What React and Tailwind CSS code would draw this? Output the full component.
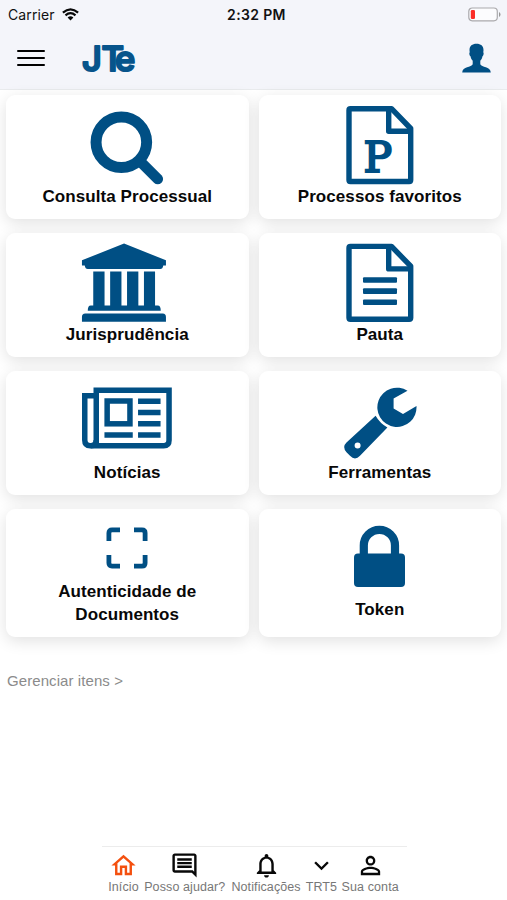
const BLUE = "#004f84";

function Art({ box, children }) {
  return (
    <svg className="h-[84px] w-[92px] shrink-0" viewBox={box} fill={BLUE}>
      {children}
    </svg>
  );
}

function Sheet() {
  return (
    <g fill="none" stroke={BLUE} strokeWidth="5.4" strokeLinejoin="round">
      <path d="M350.500 108.700H391.500L410.700 128.500V180Q410.700 181.500 409.200 181.500H350.500Q349 181.500 349 180V110.200Q349 108.700 350.500 108.700Z" />
      <path d="M388.700 109V131.200H410.500" />
    </g>
  );
}

function SearchArt() {
  return (
    <Art box="81.250 102 92 84">
      <circle cx="121.600" cy="142.300" r="25.300" fill="none" stroke={BLUE} strokeWidth="11" />
      <path d="M141 162L158 179" stroke={BLUE} strokeWidth="10.600" strokeLinecap="round" />
    </Art>
  );
}

function FavoriteArt() {
  return (
    <Art box="334 102 92 84">
      <Sheet />
      <text
        transform="translate(363.500 171.600)"
        fontSize="42.500"
        fontWeight="400"
        fontFamily="'DejaVu Serif', serif"
        stroke={BLUE}
        strokeWidth="2.200"
      >
        P
      </text>
    </Art>
  );
}

function CourtArt() {
  return (
    <Art box="81.250 240 92 84">
      <path d="M124.300 243.500L166.200 260.300V265.500H163.500Q163 269 160.500 269H88Q85.500 269 85 265.500H82.200V260.300Z" />
      <path d="M93.500 271.500H104.800V305.500H110.400V271.500H121.700V305.500H127.300V271.500H138.600V305.500H144.200V271.500H155.300V305.500H158Q161 305.500 161 310.800H88Q88 305.500 91 305.500H93.500Z" />
      <path d="M82.200 321.800V317Q82.200 313.500 85.500 313.500H163Q166.200 313.500 166.200 317V321.800Z" />
    </Art>
  );
}

function PautaArt() {
  return (
    <Art box="334 102.300 92 84">
      <Sheet />
      <rect x="363" y="139.500" width="34" height="5.600" rx="1" />
      <rect x="363" y="150.600" width="34" height="5.600" rx="1" />
      <rect x="363" y="161.700" width="34" height="5.600" rx="1" />
    </Art>
  );
}

function NewsArt() {
  return (
    <Art box="81.250 378 92 84">
      <g fill="none" stroke={BLUE} strokeWidth="5.500">
        <path d="M96.500 445.700V390.200H169.300V440.200Q169.300 445.700 164 445.700H90.500Q85 445.700 85 440V395.800H94" />
        <path d="M96.500 440Q96.500 445.700 91 445.700" />
        <rect x="107.400" y="401" width="22.800" height="22.800" />
        <path d="M104.700 434.900H133M138.300 401.300H160.800M138.300 412.500H160.800M138.300 423.700H160.800M138.300 434.900H160.800" />
      </g>
    </Art>
  );
}

function WrenchArt() {
  return (
    <Art box="334 378.400 92 84">
      <path d="M407.500 391.200A19.600 19.600 0 1 0 416.500 406.500L403 414.500L393.600 409V398.800Z" />
      <path
        fillRule="evenodd"
        d="M375.600 416.200Q380 424 387.400 427.800L360 456.200Q355 461.500 350 456.200L346.500 452.600Q341.800 447.500 346.500 443Z M357.600 443A3 3 0 1 0 357.600 449A3 3 0 1 0 357.600 443Z"
      />
    </Art>
  );
}

function ScanArt() {
  return (
    <svg className="h-[42px] w-[42px] shrink-0" viewBox="0 0 42 42" fill="none" stroke={BLUE} strokeWidth="4.800">
      <path d="M2.900 14V6Q2.900 2.900 6 2.900H14M28 2.900H36Q39.100 2.900 39.100 6V14M39.100 28V36Q39.100 39.100 36 39.100H28M14 39.100H6Q2.900 39.100 2.900 36V28" />
    </svg>
  );
}

function LockArt() {
  return (
    <svg className="h-[62px] w-[51px] shrink-0" viewBox="0 0 51 62" fill={BLUE}>
      <rect y="28.400" width="51" height="33.600" rx="4" />
      <path d="M9.800 32V20.500A15.600 15.600 0 0 1 41 20.500V32" fill="none" stroke={BLUE} strokeWidth="8.200" />
    </svg>
  );
}

const cards = [
  { art: <SearchArt />, label: "Consulta Processual" },
  { art: <FavoriteArt />, label: "Processos favoritos" },
  { art: <CourtArt />, label: "Jurisprudência" },
  { art: <PautaArt />, label: "Pauta" },
  { art: <NewsArt />, label: "Notícias" },
  { art: <WrenchArt />, label: "Ferramentas" },
];

const cardClass =
  "flex flex-col items-center rounded-[9px] bg-white shadow-[0_4px_16px_rgba(0,0,0,0.12)] text-[17px] leading-[23px] font-bold tracking-[0.08px] text-[#080808]";

function TabIcon({ d, color = "#080808" }) {
  return (
    <svg className="h-[29px] w-[29px] shrink-0" viewBox="0 0 24 24" fill={color}>
      <path d={d} />
    </svg>
  );
}

const tabs = [
  {
    label: "Início",
    width: "w-[31px]",
    color: "#f4500f",
    d: "M12 5.690l5 4.500V18h-2v-6H9v6H7v-7.810l5-4.500M12 3L2 12h3v8h6v-6h2v6h6v-8h3L12 3z",
  },
  {
    label: "Posso ajudar?",
    width: "w-[81px]",
    d: "M21.990 4c0-1.100-.890-2-1.990-2H4c-1.100 0-2 .900-2 2v12c0 1.100.900 2 2 2h14l4 4-.010-18zM20 4v13.170L18.830 16H4V4h16zM6 12h12v2H6zm0-3h12v2H6zm0-3h12v2H6z",
  },
  {
    label: "Notificações",
    width: "w-[71px]",
    d: "M12 22c1.100 0 2-.900 2-2h-4c0 1.100.900 2 2 2zm6-6v-5c0-3.070-1.630-5.640-4.500-6.320V4c0-.830-.670-1.500-1.500-1.500s-1.500.670-1.500 1.500v.680C7.640 5.360 6 7.920 6 11v5l-2 2v1h16v-1l-2-2zm-2 1H8v-6c0-2.480 1.510-4.500 4-4.500s4 2.020 4 4.500v6z",
  },
  { label: "TRT5", width: "w-[29px]", d: "M7.410 8.590L12 13.170l4.590-4.580L18 10l-6 6-6-6 1.410-1.410z" },
  {
    label: "Sua conta",
    width: "w-[58px]",
    d: "M12 5.900a2.100 2.100 0 1 1 0 4.200 2.100 2.100 0 0 1 0-4.200m0 9c2.970 0 6.100 1.460 6.100 2.100v1.100H5.900V17c0-.640 3.130-2.100 6.100-2.100M12 4C9.790 4 8 5.790 8 8s1.790 4 4 4 4-1.790 4-4-1.790-4-4-4zm0 9c-2.670 0-8 1.340-8 4v3h16v-3c0-2.660-5.330-4-8-4z",
  },
];

export default function App() {
  return (
    <div className="flex h-[900px] w-[507px] flex-col overflow-hidden bg-white font-['Liberation_Sans',Arial,sans-serif]">
      <header className="h-[90px] shrink-0 border-b border-[#e9ebed] bg-[#f4f5fa]">
        <div className="grid h-[28px] grid-cols-3 items-center pr-[6px] pl-[8px] font-['Inter',sans-serif] text-[#111]">
          <div className="flex items-center gap-[7px]">
            <span className="text-[14px] tracking-[0.1px]">Carrier</span>
            <svg className="h-[13px] w-[17px]" viewBox="0 0 17 13" fill="none" stroke="#080808" strokeWidth="2.200">
              <path d="M.900 4.600Q8.500-2 16.100 4.600M3.500 7.300Q8.500 3 13.500 7.300" />
              <path d="M5.600 9.500Q8.500 7 11.400 9.500L8.500 12.600Z" fill="#080808" stroke="none" />
            </svg>
          </div>
          <div className="pl-[4px] text-center text-[14px] font-semibold tracking-[0.35px] whitespace-nowrap">2:32 PM</div>
          <svg className="h-[15px] w-[33px] justify-self-end" viewBox="0 0 33 15">
            <rect x=".800" y="1" width="28.500" height="12.800" rx="3.500" fill="#fcfcfe" stroke="#aaa9ac" strokeWidth="1.200" />
            <rect x="2.800" y="3" width="4.200" height="9" rx="1.300" fill="#fb2d28" />
            <path d="M31 5V10Q32.500 9.300 32.500 7.500Q32.500 5.700 31 5Z" fill="#999" />
          </svg>
        </div>
        <div className="flex h-[60px] items-center pr-[16px] pl-[17px]">
          <div className="flex w-[28px] flex-col gap-[4.700px]">
            <div className="h-[2.400px] rounded bg-black" />
            <div className="h-[2.400px] rounded bg-black" />
            <div className="h-[2.400px] rounded bg-black" />
          </div>
          <svg className="ml-[33px] h-[54px] w-[64px]" viewBox="78 31 64 54" aria-label="JTe">
            <text
              x="82 101.500 115"
              y="70.600"
              fontFamily="Inter, sans-serif"
              fontWeight="500"
              fontSize="34.500"
              fill="#07548b"
              stroke="#07548b"
              strokeWidth="2.200"
              strokeLinejoin="round"
            >
              JTe
            </text>
          </svg>
          <svg className="ml-auto h-[30px] w-[29px]" viewBox="0 0 29 30" fill={BLUE}>
            <path d="M14.500.700C18.800.700 21.500 2.900 21.500 7Q21.500 8.400 21.200 9.200C22.100 9.500 21.500 13 20.500 13.300C20 15.800 19 17 18.300 17.800V21.300C19.500 24.500 28.500 23.500 28.800 29.500H.200C.500 23.500 9.500 24.500 10.700 21.300V17.800C10 17 9 15.800 8.500 13.300C7.500 13 6.900 9.500 7.800 9.200Q7.500 8.400 7.500 7C7.500 2.900 10.200.700 14.500.700Z" />
          </svg>
        </div>
      </header>

      <main className="flex grow flex-col px-[6px] pt-[5px]">
        <div className="grid grid-cols-[242.500px_242.500px] gap-x-[10px] gap-y-[14px]">
          {cards.map((c) => (
            <div key={c.label} className={`${cardClass} h-[124px] pt-[7px]`}>
              {c.art}
              <span className="-mt-[1px]">{c.label}</span>
            </div>
          ))}
          <div className={`${cardClass} h-[128px] pt-[18px]`}>
            <ScanArt />
            <span className="mt-[11px] w-[160px] text-center">Autenticidade de Documentos</span>
          </div>
          <div className={`${cardClass} h-[128px] pt-[16px]`}>
            <LockArt />
            <span className="mt-[11px]">Token</span>
          </div>
        </div>
        <button className="mt-[34px] ml-[1px] self-start text-[15px] leading-5 tracking-[0.08px] text-[#8b8b8b]">
          Gerenciar itens &gt;
        </button>
      </main>

      <nav className="ml-[102px] flex h-[54px] w-[305px] shrink-0 gap-[5.300px] border-t border-[#ececec] pt-[4px] pl-[6px]">
        {tabs.map((t) => (
          <div key={t.label} className={`${t.width} flex flex-col items-center`}>
            <TabIcon d={t.d} color={t.color} />
            <span className="text-[12.5px] leading-[15px] tracking-[0.1px] whitespace-nowrap text-[#777]">{t.label}</span>
          </div>
        ))}
      </nav>
    </div>
  );
}
